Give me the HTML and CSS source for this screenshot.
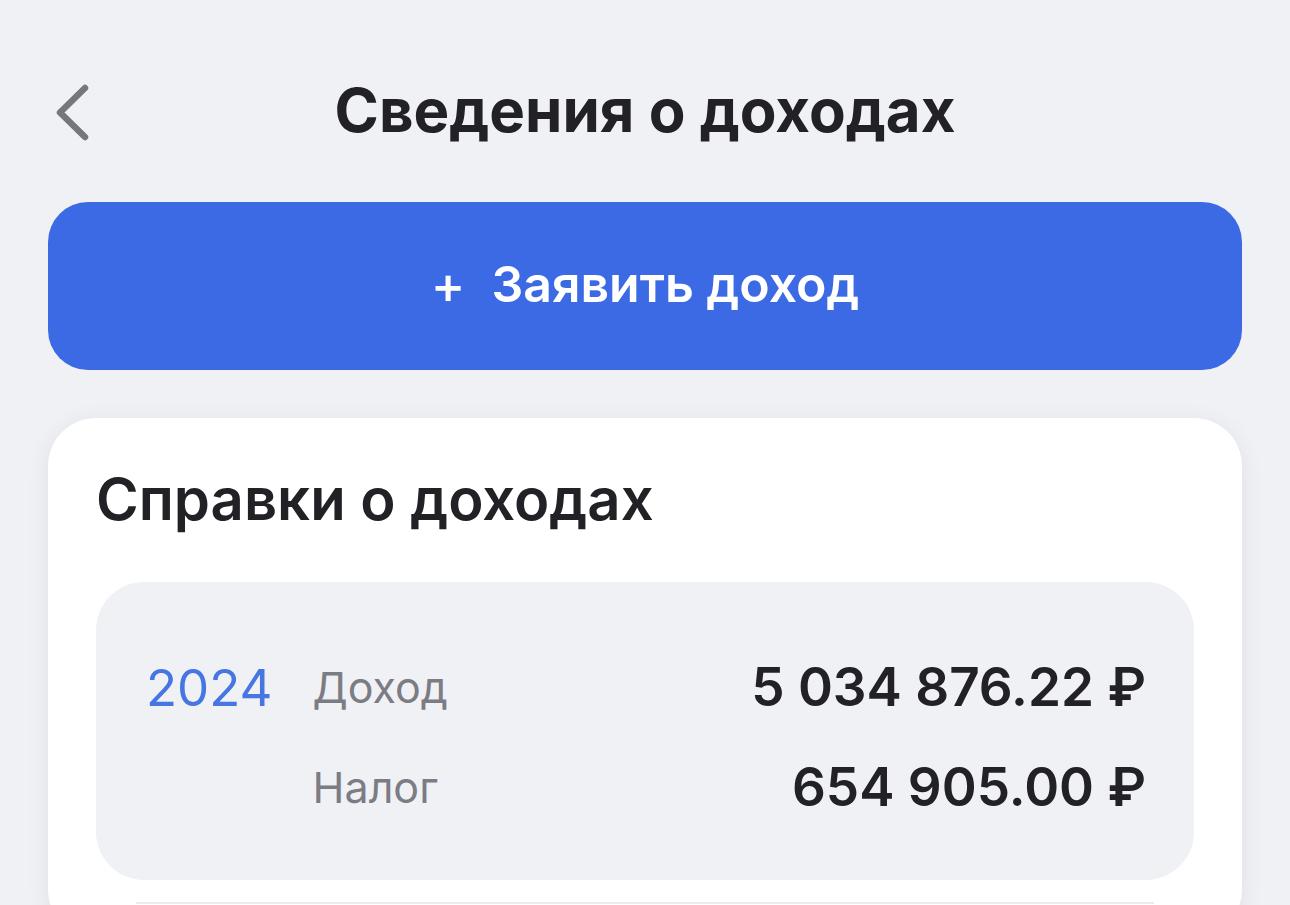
FILE: index.html
```html
<!DOCTYPE html>
<html lang="ru">
<head>
<meta charset="utf-8">
<title>Сведения о доходах</title>
<link rel="stylesheet" href="styles.css">
</head>
<body>
<div class="screen">
  <header class="nav">
    <button class="back" aria-label="Назад">
      <svg width="40" height="60" viewBox="0 0 40 60"><path d="M31 6 L6 30.5 L31 55" fill="none" stroke="#76777d" stroke-width="6.5" stroke-linecap="round" stroke-linejoin="round"/></svg>
    </button>
    <h1 class="nav-title">Сведения о доходах</h1>
  </header>

  <button class="primary-btn"><span class="plus">+</span><span>Заявить доход</span></button>

  <section class="card">
    <h2 class="card-title">Справки о доходах</h2>
    <div class="income-box">
      <div class="year">2024</div>
      <div class="label">Доход</div>
      <div class="value">5 034 876.22 ₽</div>
      <div class="label row2">Налог</div>
      <div class="value">654 905.00 ₽</div>
    </div>
    <div class="divider"></div>
  </section>
</div>
</body>
</html>
```

FILE: styles.css
```css
* { box-sizing: border-box; }
html, body { margin: 0; padding: 0; }
body {
  background: #f0f1f5;
  font-family: Inter, "Noto Sans", "DejaVu Sans", sans-serif;
  color: #222226;
  width: 1290px;
  height: 905px;
  overflow: hidden;
}
.screen {
  display: flex;
  flex-direction: column;
  padding: 0 48px;
}
.nav {
  position: relative;
  height: 202px;
  display: flex;
  justify-content: center;
  padding-top: 70px;
}
.back {
  position: absolute;
  left: 6px;
  top: 82px;
  background: none;
  border: none;
  padding: 0;
  width: 40px;
  height: 60px;
}
.nav-title {
  margin: 0;
  font-size: 60px;
  line-height: 80px;
  font-weight: 700;
  letter-spacing: 0;
}
.primary-btn {
  height: 168px;
  border: none;
  border-radius: 40px;
  background: #3c6ae4;
  color: #ffffff;
  font-family: inherit;
  font-size: 50px;
  font-weight: 600;
  display: flex;
  align-items: center;
  justify-content: center;
  gap: 26px;
  padding: 0 0 4px;
}
.plus { font-weight: 500; font-size: 52px; }
.card {
  margin-top: 48px;
  background: #ffffff;
  border-radius: 48px;
  padding: 48px 48px 0;
  box-shadow: 0 4px 24px rgba(30, 35, 60, 0.07);
  height: 520px;
}
.card-title {
  margin: 0 0 50px;
  font-size: 58px;
  line-height: 66px;
  font-weight: 600;
}
.income-box {
  background: #f0f1f4;
  border-radius: 48px;
  height: 298px;
  padding: 70px 48px 0 50px;
  display: grid;
  grid-template-columns: auto auto 1fr;
  grid-template-rows: 70px 70px;
  row-gap: 30px;
  column-gap: 40px;
  align-items: center;
}
.year {
  color: #4676e2;
  font-size: 51px;
  font-weight: 400;
}
.label {
  color: #7b7c84;
  font-size: 43px;
  font-weight: 400;
}
.label.row2 { grid-column: 2; }
.value {
  text-align: right;
  font-size: 53px;
  font-weight: 600;
  color: #222226;
}
.divider {
  margin: 22px 40px 0;
  height: 2px;
  background: #ececef;
}
```
